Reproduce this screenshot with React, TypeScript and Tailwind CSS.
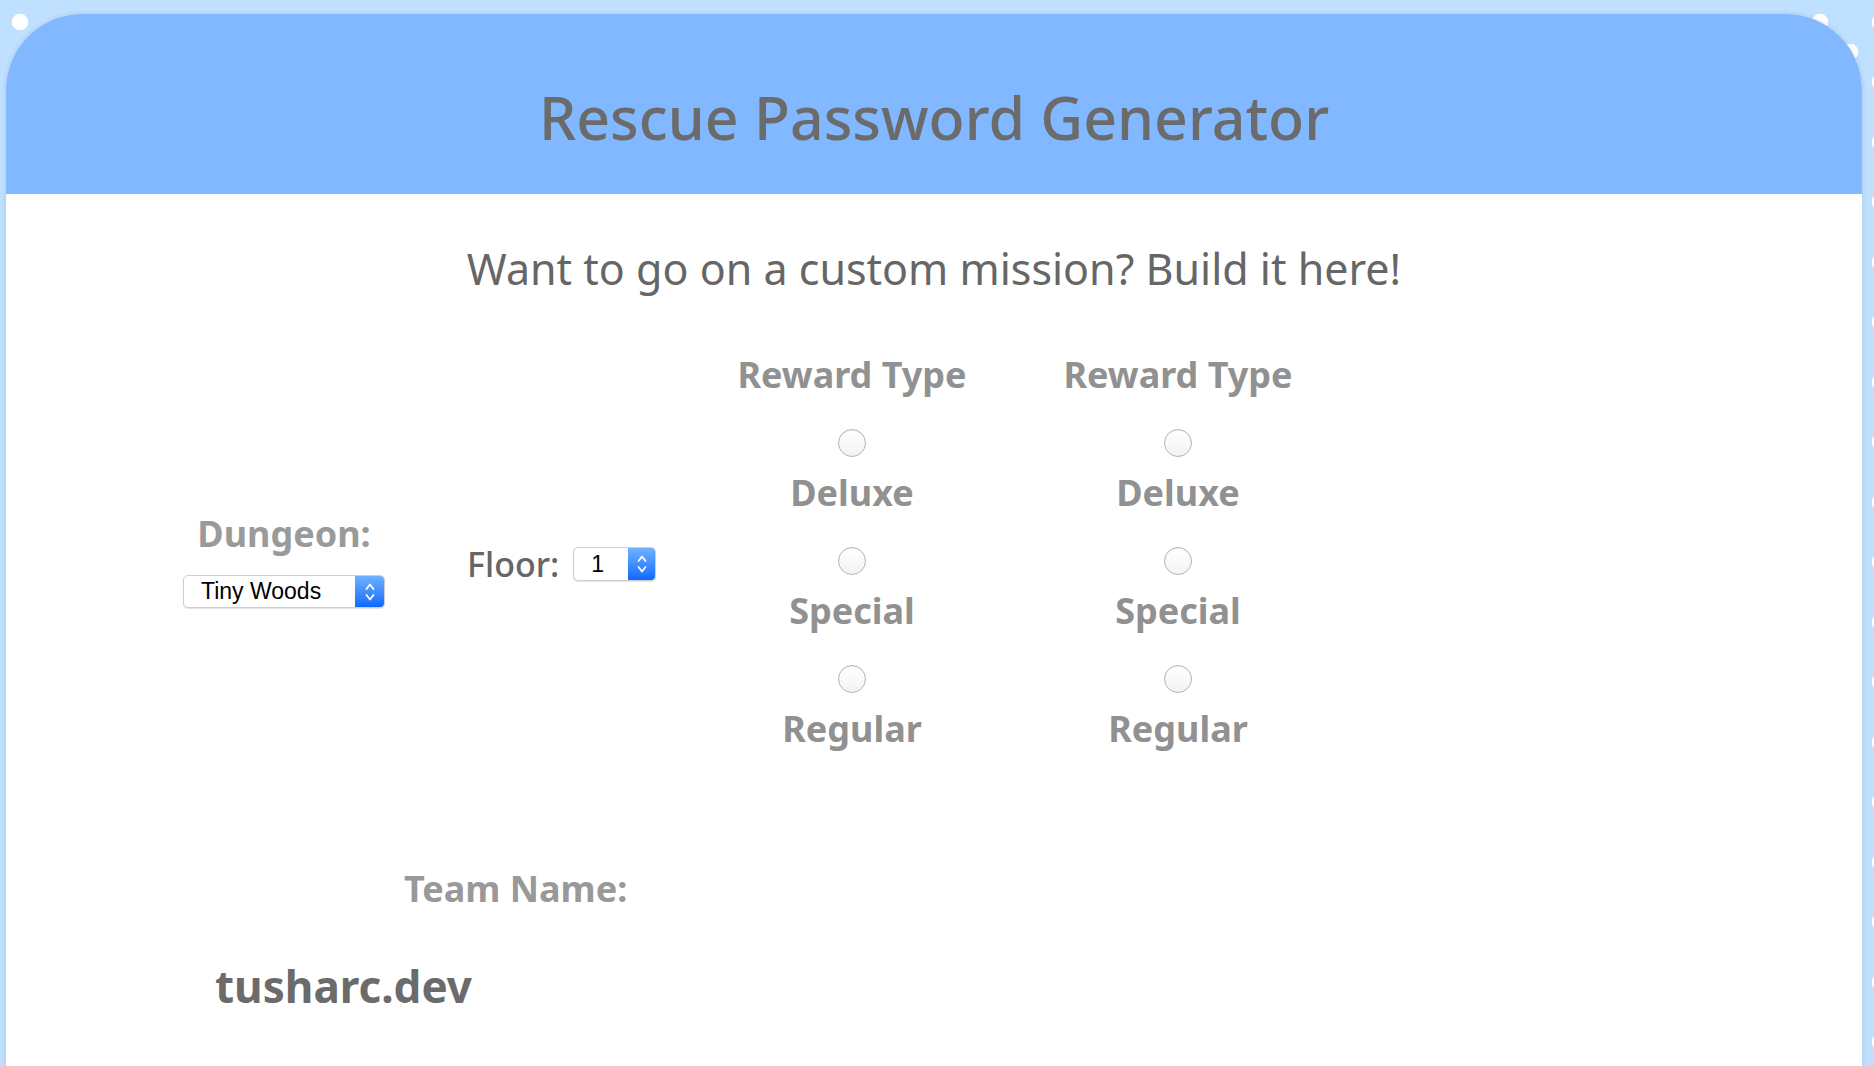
import React from "react";

const Chevrons = () => (
    <svg width="12" height="22" viewBox="0 0 12 22" fill="none" stroke="white" strokeWidth="1.8" strokeLinecap="round" strokeLinejoin="round">
        <path d="M2.5 8 L6 3.5 L9.5 8" />
        <path d="M2.5 14 L6 18.5 L9.5 14" />
    </svg>
);

const FakeSelect = ({ value, width, height, blue }: { value: string; width: string; height: string; blue: string }) => (
    <div className={`flex ${width} ${height} items-stretch overflow-hidden rounded-[5px] border border-[#cfcfcf] bg-white shadow-[0_1px_1px_rgba(0,0,0,0.12)]`}>
        <span className="flex flex-1 items-center pl-[17px] font-['Liberation_Sans',Arial,sans-serif] text-[23px] text-black">
            {value}
        </span>
        <span className={`flex ${blue} items-center justify-center bg-gradient-to-b from-[#6fb0ff] to-[#0a68ff]`}>
            <Chevrons />
        </span>
    </div>
);

const RewardColumn = ({ name }: { name: string }) => {
    const options = ["Deluxe", "Special", "Regular"];
    return (
        <div className="flex w-[260px] flex-col items-center">
            <h3 className="text-[36px] font-bold leading-[40px] text-[#919191]">Reward Type</h3>
            {options.map((opt) => (
                <label key={opt} className="flex flex-col items-center">
                    <input
                        type="radio"
                        name={name}
                        className="mt-[34px] size-[28px] appearance-none rounded-full border border-[#b4b4b4] bg-gradient-to-b from-white to-[#f3f3f3] shadow-[inset_0_1px_1px_rgba(0,0,0,0.05)]"
                    />
                    <span className="mt-[16px] text-[36px] font-bold leading-[40px] text-[#919191]">{opt}</span>
                </label>
            ))}
        </div>
    );
};

const App = () => {
    return (
        <div className="min-h-screen overflow-hidden bg-[#bfe0fe] [background-image:radial-gradient(circle_at_20px_22px,#fff_8px,transparent_8.5px),radial-gradient(circle_at_50px_52px,#fff_8px,transparent_8.5px)] [background-size:60px_60px] pt-[14px] font-['Noto_Sans',sans-serif]">
            <div className="ml-[6px] mr-[12px] min-h-[1100px] overflow-hidden rounded-t-[76px] bg-white shadow-[0_0_5px_rgba(0,0,0,0.12)]">
                <header className="h-[180px] bg-[#82b8ff] pt-[67px] text-center">
                    <h1 className="text-[59px] font-medium leading-[72px] text-[#6b6b6b]">
                        Rescue Password Generator
                    </h1>
                </header>

                <p className="mt-[51px] text-center text-[43px] leading-[48px] text-[#666666]">
                    Want to go on a custom mission? Build it here!
                </p>

                <div className="mt-[62px] flex items-center pl-[177px]">
                    <div className="mt-[17px] flex w-[202px] flex-col items-center">
                        <h3 className="text-[36px] font-bold leading-[42px] text-[#9a9a9a]">Dungeon:</h3>
                        <div className="mt-[20px]">
                            <FakeSelect value="Tiny Woods" width="w-[202px]" height="h-[33px]" blue="w-[29px]" />
                        </div>
                    </div>

                    <div className="ml-[82px] mt-[24px] flex w-[188px] items-center">
                        <span className="text-[34px] font-medium leading-[40px] text-[#666666]">Floor:</span>
                        <div className="ml-[14px]">
                            <FakeSelect value="1" width="w-[83px]" height="h-[34px]" blue="w-[27px]" />
                        </div>
                    </div>

                    <div className="ml-[67px]">
                        <RewardColumn name="reward-a" />
                    </div>
                    <div className="ml-[66px]">
                        <RewardColumn name="reward-b" />
                    </div>
                </div>

                <div className="mt-[118px] pl-[398px]">
                    <h3 className="text-[36px] font-bold leading-[44px] text-[#999999]">Team Name:</h3>
                </div>

                <div className="mt-[49px] pl-[209px]">
                    <span className="text-[44px] font-bold leading-[52px] text-[#6b6b6b]">tusharc.dev</span>
                </div>
            </div>
        </div>
    );
};

export default App;
